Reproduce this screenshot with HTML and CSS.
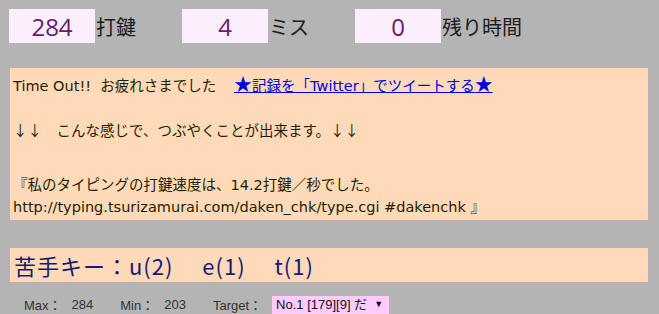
FILE: index.html
```html
<!DOCTYPE html>
<html lang="ja">

<head>
    <meta charset="UTF-8">
    <meta name="viewport" content="width=device-width, initial-scale=1.0">
    <title>打鍵チェック 結果</title>
    <link rel="stylesheet" href="styles.css">
</head>

<body>
    <div class="stats">
        <div class="stat">
            <span class="stat-value">284</span>
            <span class="stat-label">打鍵</span>
        </div>
        <div class="stat">
            <span class="stat-value">4</span>
            <span class="stat-label">ミス</span>
        </div>
        <div class="stat">
            <span class="stat-value">0</span>
            <span class="stat-label">残り時間</span>
        </div>
    </div>

    <div class="result">
        <p class="result-line">Time Out!!&nbsp;&nbsp;お疲れさまでした&nbsp;&nbsp;&nbsp;<a href="#" class="tweet-link"><span class="star">★</span>記録を「Twitter」でツイートする<span class="star">★</span></a></p>
        <p class="result-line result-hint"><span class="wide">↓↓</span>　こんな感じで、つぶやくことが出来ます。<span class="wide">↓↓</span></p>
        <p class="result-line result-tweet">『私のタイピングの打鍵速度は、14.2打鍵／秒でした。<br>http://typing.tsurizamurai.com/daken_chk/type.cgi #dakenchk 』</p>
    </div>

    <div class="weak-keys">苦手キー：u(2)　 e(1)　 t(1)</div>

    <div class="range">
        <span class="range-label">Max：</span>
        <span class="range-value">284</span>
        <span class="range-label">Min：</span>
        <span class="range-value">203</span>
        <span class="range-label">Target：</span>
        <div class="target-select">
            <select id="target">
                <option value="1">No.1 [179][9] だ</option>
            </select>
        </div>
    </div>
</body>

</html>
```

FILE: styles.css
```css
body {
    margin: 9px;
    background-color: #b4b4b4;
    font-family: "Noto Sans CJK JP", sans-serif;
}

.stats {
    display: flex;
}

.stat {
    display: flex;
    align-items: center;
    width: 173px;
}

.stat-value {
    display: flex;
    align-items: center;
    justify-content: center;
    width: 86px;
    height: 34px;
    background-color: #fdeefe;
    color: #6a1a6a;
    font-family: "Open Sans", sans-serif;
    font-size: 24px;
}

.stat-label {
    margin-left: 1px;
    font-size: 20px;
    color: #1c1c1c;
}

.result {
    margin-top: 24px;
    width: 630px;
    padding: 4px 5px 2px 3px;
    border: 1px solid #c6a9b6;
    background-color: #ffdab9;
    color: #1f1d00;
    font-family: "DejaVu Sans", "Noto Sans CJK JP", sans-serif;
    font-size: 14.5px;
    line-height: 22px;
}

.result-line {
    margin: 0;
    white-space: nowrap;
}

.result-hint {
    margin-top: 22px;
}

.result-tweet {
    margin-top: 32px;
}

.wide {
    font-family: "Noto Sans CJK JP", sans-serif;
}

.star {
    font-family: "Noto Sans CJK JP", sans-serif;
    font-size: 18px;
}

.tweet-link {
    margin-left: 4px;
    color: #0000e0;
}

.weak-keys {
    margin-top: 26px;
    width: 634px;
    height: 34px;
    padding-left: 4px;
    border: 1px solid #c6a9b6;
    background-color: #ffdab9;
    color: #191970;
    font-size: 22px;
    line-height: 34px;
    letter-spacing: 1px;
    white-space: pre;
}

.range {
    display: flex;
    align-items: center;
    margin-top: 12px;
    padding-left: 15px;
    color: #333333;
    font-family: "Liberation Sans", "Noto Sans CJK JP", sans-serif;
    font-size: 13px;
}

.range-label {
    margin-right: 10px;
}

.range-value {
    margin-right: 27px;
}

.target-select {
    position: relative;
}

.target-select select {
    appearance: none;
    -webkit-appearance: none;
    width: 117px;
    height: 18px;
    padding: 0 0 0 4px;
    border: none;
    border-radius: 0;
    background-color: #ffccff;
    color: #111111;
    font-family: "Liberation Sans", "Noto Sans CJK JP", sans-serif;
    font-size: 13px;
}

.target-select::after {
    content: "▼";
    position: absolute;
    right: 6px;
    top: 3px;
    font-size: 9px;
    color: #111111;
    pointer-events: none;
}
```
